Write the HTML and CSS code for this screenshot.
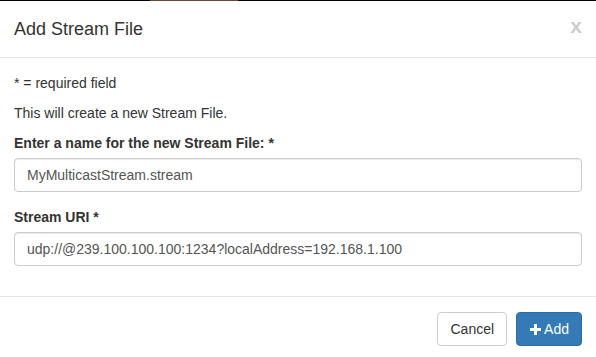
FILE: index.html
```html
<!DOCTYPE html>
<html>
<head>
<meta charset="utf-8">
<link rel="stylesheet" href="styles.css">
</head>
<body>
<div class="topedge"></div>
<div class="modal">
  <div class="modal-header">
    <h4 class="modal-title">Add Stream File</h4>
    <span class="close">x</span>
  </div>
  <div class="modal-body">
    <p>* = required field</p>
    <p>This will create a new Stream File.</p>
    <div class="form-group">
      <label class="label">Enter a name for the new Stream File: *</label>
      <div class="input">MyMulticastStream.stream</div>
    </div>
    <div class="form-group">
      <label class="label">Stream URI *</label>
      <div class="input">udp://@239.100.100.100:1234?localAddress=192.168.1.100</div>
    </div>
  </div>
  <div class="modal-footer">
    <button class="btn btn-default">Cancel</button>
    <button class="btn btn-primary"><svg class="plus" width="11" height="11" viewBox="0 0 11 11"><path d="M4 0h3v4h4v3H7v4H4V7H0V4h4z" fill="#fff"/></svg>Add</button>
  </div>
</div>
</body>
</html>
```
FILE: styles.css
```css
html, body {
  margin: 0;
  padding: 0;
  background: #fff;
}
body {
  font-family: "Liberation Sans", Arial, sans-serif;
  font-size: 14px;
  line-height: 20px;
  color: #333;
  width: 596px;
  height: 357px;
  overflow: hidden;
}
.topedge {
  height: 1px;
  background: linear-gradient(to right, #000 0, #000 150px, #6b4a2c 150px, #6b4a2c 238px, #000 238px, #000 100%);
}
.modal {
  display: flex;
  flex-direction: column;
}
.modal-header {
  display: flex;
  justify-content: space-between;
  align-items: flex-start;
  padding: 15px 14px 15px 14px;
  border-bottom: 1px solid #e5e5e5;
}
.modal-title {
  margin: 0;
  font-size: 18px;
  font-weight: 500;
  line-height: 26px;
  color: #333;
}
.close {
  font-size: 21px;
  font-weight: bold;
  line-height: 21px;
  color: #000;
  opacity: 0.2;
  margin-top: -1px;
}
.modal-body {
  padding: 15px 14px 15px 14px;
}
.modal-body p {
  margin: 0 0 10px 0;
}
.form-group {
  margin-bottom: 15px;
  display: flex;
  flex-direction: column;
}
.label {
  font-weight: bold;
  margin-bottom: 5px;
}
.input {
  height: 34px;
  box-sizing: border-box;
  padding: 6px 12px;
  border: 1px solid #ccc;
  border-radius: 4px;
  color: #555;
  line-height: 20px;
  box-shadow: inset 0 1px 1px rgba(0,0,0,0.075);
}
.modal-footer {
  border-top: 1px solid #e5e5e5;
  padding: 15px 14px;
  display: flex;
  justify-content: flex-end;
  gap: 9px;
}
.btn {
  font-family: "Liberation Sans", Arial, sans-serif;
  font-size: 14px;
  line-height: 20px;
  height: 34px;
  padding: 6px 12px;
  border-radius: 4px;
  border: 1px solid #ccc;
  display: inline-flex;
  align-items: center;
  box-sizing: border-box;
}
.btn-default {
  background: #fff;
  color: #333;
}
.btn-primary {
  background: #337ab7;
  border-color: #2e6da4;
  color: #fff;
  padding-left: 13px;
}
.plus {
  margin-right: 3px;
}
```
